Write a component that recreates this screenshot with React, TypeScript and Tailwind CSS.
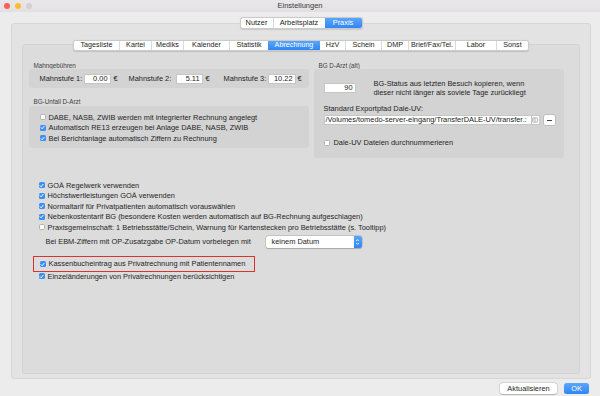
import React from "react";

const Check = ({ checked }: { checked: boolean }) =>
  checked ? (
    <span className="w-[6px] h-[6px] rounded-[1.5px] bg-[#3b8ff6] flex items-center justify-center shrink-0">
      <svg width="5" height="5" viewBox="0 0 10 10">
        <path d="M2 5.3 L4.2 7.6 L8.2 2.6" stroke="white" strokeWidth="1.9" fill="none" strokeLinecap="round" strokeLinejoin="round" />
      </svg>
    </span>
  ) : (
    <span className="w-[6px] h-[6px] rounded-[1.5px] bg-white border-[0.5px] border-[#b0b0b0] shrink-0" />
  );

const Row = ({ checked, children }: { checked: boolean; children: React.ReactNode }) => (
  <div className="flex items-center h-[10.5px] gap-[3px] whitespace-nowrap">
    <Check checked={checked} />
    <span>{children}</span>
  </div>
);

const Field = ({ w, value }: { w: string; value: string }) => (
  <span className={`${w} h-[10px] bg-white border-[0.5px] border-[#c6c6c6] flex items-center justify-end pr-[2px] shrink-0`}>{value}</span>
);

const tabs = ["Tagesliste", "Kartei", "Mediks", "Kalender", "Statistik", "Abrechnung", "HzV", "Schein", "DMP", "Brief/Fax/Tel.", "Labor", "Sonst"];
const tabW = ["w-[46px]", "w-[32px]", "w-[32px]", "w-[46px]", "w-[38px]", "w-[52px]", "w-[26px]", "w-[36px]", "w-[27px]", "w-[47px]", "w-[41px]", "w-[31px]"];

export default function App() {
  return (
    <div className="w-[600px] h-[396px] bg-[#ececec] flex flex-col overflow-hidden text-[#242424] text-[7.4px] font-['Liberation_Sans',Arial,sans-serif]">
      {/* title bar */}
      <div className="h-[12px] shrink-0 grid grid-cols-[1fr_auto_1fr] items-center bg-linear-to-b from-[#e9e7e9] to-[#e2e0e2]">
        <div className="flex items-center gap-[5px] pl-[4px]">
          <span className="w-[6px] h-[6px] rounded-full bg-[#fc5f57]" />
          <span className="w-[6px] h-[6px] rounded-full bg-[#fdbc2e]" />
          <span className="w-[6px] h-[6px] rounded-full bg-[#d3d1d3]" />
        </div>
        <div className="text-[7.5px] text-[#3a3a3a] leading-none">Einstellungen</div>
        <div />
      </div>

      <div className="flex flex-col items-center w-[580px] ml-[11px] pt-[5px]">
        {/* segmented */}
        <div className="relative z-10 h-[12px] flex bg-white border-[0.5px] border-[#cacaca] rounded-[3px] shadow-[0_0.5px_1px_rgba(0,0,0,0.12)] overflow-hidden">
          <div className="w-[33px] flex items-center justify-center border-r-[0.5px] border-[#d6d6d6]">Nutzer</div>
          <div className="w-[51px] flex items-center justify-center">Arbeitsplatz</div>
          <div className="w-[37px] flex items-center justify-center bg-linear-to-b from-[#5aa6fb] to-[#2f86f5] text-white">Praxis</div>
        </div>

        {/* outer panel */}
        <div className="-mt-[6px] w-full h-[356px] bg-[#e3e3e3] border-[0.5px] border-[#d6d6d6] rounded-[3px] flex flex-col items-center pt-[15.5px]">
          {/* tab bar */}
          <div className="relative z-10 h-[11px] flex bg-white border-[0.5px] border-[#cacaca] rounded-[2.5px] shadow-[0_0.5px_1px_rgba(0,0,0,0.12)] overflow-hidden text-[7.2px]">
            {tabs.map((t, i) => (
              <div
                key={t}
                className={`${tabW[i]} flex items-center justify-center ${i < tabs.length - 1 && i !== 4 && i !== 5 ? "border-r-[0.5px] border-[#dadada]" : ""} ${t === "Abrechnung" ? "bg-linear-to-b from-[#5aa6fb] to-[#2f86f5] text-white" : ""}`}
              >
                {t}
              </div>
            ))}
          </div>

          {/* inner panel */}
          <div className="-mt-[7px] w-[558px] h-[330px] bg-[#dcdcdc] border-[0.5px] border-[#d2d2d2] rounded-[3px] pl-[5.5px] pt-[18.5px] flex flex-col">
            <div className="flex items-start gap-[5px]">
              {/* left column */}
              <div className="w-[280px] flex flex-col">
                <div className="h-[6px] leading-[6px] text-[6.3px] pl-[5px] text-[#3c3c3c]">Mahngebühren</div>
                <div className="h-[19px] bg-[#d3d3d3] rounded-[3px] flex items-center pl-[11px] whitespace-nowrap">
                  <span className="w-[44px]">Mahnstufe 1:</span>
                  <Field w="w-[27px]" value="0.00" />
                  <span className="w-[18px] pl-[3px]">€</span>
                  <span className="w-[47px]">Mahnstufe 2:</span>
                  <Field w="w-[27px]" value="5.11" />
                  <span className="w-[21px] pl-[3px]">€</span>
                  <span className="w-[44px]">Mahnstufe 3:</span>
                  <Field w="w-[28px]" value="10.22" />
                  <span className="pl-[2px]">€</span>
                </div>
                <div className="mt-[11px] mb-[1px] h-[6px] leading-[6px] text-[6.3px] pl-[5px] text-[#3c3c3c]">BG-Unfall D-Arzt</div>
                <div className="h-[42px] bg-[#d3d3d3] rounded-[3px] flex flex-col pl-[11px] pt-[6px]">
                  <Row checked={false}>DABE, NASB, ZWIB werden mit integrierter Rechnung angelegt</Row>
                  <Row checked={true}>Automatisch RE13 erzeugen bei Anlage DABE, NASB, ZWIB</Row>
                  <Row checked={true}>Bei Berichtanlage automatisch Ziffern zu Rechnung</Row>
                </div>
              </div>

              {/* right column */}
              <div className="w-[250px] flex flex-col">
                <div className="h-[6px] leading-[6px] text-[6.3px] pl-[5px] text-[#3c3c3c]">BG D-Arzt (alt)</div>
                <div className="h-[89px] bg-[#d3d3d3] rounded-[3px] flex flex-col pl-[10px] pt-[10px]">
                  <div className="flex items-center h-[18px]">
                    <Field w="w-[32px]" value="90" />
                    <div className="ml-[18px] leading-[9px] whitespace-nowrap">
                      <div>BG-Status aus letzten Besuch kopieren, wenn</div>
                      <div>dieser nicht länger als soviele Tage zurückliegt</div>
                    </div>
                  </div>
                  <div className="mt-[8px] h-[8px] leading-[8px] whitespace-nowrap">Standard Exportpfad Dale-UV:</div>
                  <div className="mt-[2px] flex items-center h-[10px]">
                    <div className="w-[208px] h-[10px] bg-white border-[0.5px] border-[#c6c6c6] flex items-center pl-[1px] overflow-hidden whitespace-nowrap">
                      /Volumes/tomedo-server-eingang/TransferDALE-UV/transfer.:
                    </div>
                    <div className="w-[8px] h-[10px] bg-white border-[0.5px] border-l-0 border-[#c6c6c6] flex items-center justify-center">
                      <svg width="6" height="6" viewBox="0 0 12 12">
                        <rect x="1" y="1.5" width="10" height="9" rx="1" fill="#f2f2f2" stroke="#8a8a8a" strokeWidth="1" />
                        <line x1="6" y1="1.5" x2="6" y2="10.5" stroke="#8a8a8a" strokeWidth="1" />
                        <line x1="2.5" y1="4" x2="4.5" y2="4" stroke="#8a8a8a" strokeWidth="0.8" />
                        <line x1="2.5" y1="6" x2="4.5" y2="6" stroke="#8a8a8a" strokeWidth="0.8" />
                      </svg>
                    </div>
                    <div className="ml-[4px] w-[11px] h-[10px] bg-white rounded-[1.5px] shadow-[0_0_0_0.5px_rgba(0,0,0,0.2)] flex items-center justify-center">
                      <span className="w-[5px] h-[1px] bg-[#444]" />
                    </div>
                  </div>
                  <div className="mt-[13px] flex items-center h-[10px] gap-[4px] whitespace-nowrap">
                    <Check checked={false} />
                    <span>Dale-UV Dateien durchnummerieren</span>
                  </div>
                </div>
              </div>
            </div>

            {/* option list */}
            <div className="mt-[22px] ml-[10px] flex flex-col">
              <Row checked={true}>GOÄ Regelwerk verwenden</Row>
              <Row checked={true}>Höchstwertleistungen GOÄ verwenden</Row>
              <Row checked={true}>Normaltarif für Privatpatienten automatisch vorauswählen</Row>
              <Row checked={true}>Nebenkostentarif BG (besondere Kosten werden automatisch auf BG-Rechnung aufgeschlagen)</Row>
              <Row checked={false}>Praxisgemeinschaft: 1 Betriebsstätte/Schein, Warnung für Kartenstecken pro Betriebsstätte (s. Tooltipp)</Row>
              <div className="mt-[3.5px] h-[12px] flex items-center pl-[7px] whitespace-nowrap">
                <span className="w-[220px]">Bei EBM-Ziffern mit OP-Zusatzgabe OP-Datum vorbelegen mit</span>
                <div className="w-[96px] h-[12px] bg-white rounded-[2px] shadow-[0_0_0_0.5px_rgba(0,0,0,0.2),0_0.5px_1px_rgba(0,0,0,0.15)] flex items-center">
                  <span className="flex-1 pl-[6px]">keinem Datum</span>
                  <span className="w-[8px] h-full bg-linear-to-b from-[#5aa6fb] to-[#2f86f5] rounded-r-[2px] flex items-center justify-center">
                    <svg width="5" height="8" viewBox="0 0 5 8">
                      <path d="M1.2 3 L2.5 1.6 L3.8 3" stroke="white" strokeWidth="0.8" fill="none" />
                      <path d="M1.2 5 L2.5 6.4 L3.8 5" stroke="white" strokeWidth="0.8" fill="none" />
                    </svg>
                  </span>
                </div>
              </div>
              <div className="mt-[8px] -ml-[6px] w-[222px] h-[16px] border border-[#d8332e] flex items-center pl-[6px]">
                <Row checked={true}>Kassenbucheintrag aus Privatrechnung mit Patientennamen</Row>
              </div>
              <div className="-mt-[1px]">
                <Row checked={true}>Einzeländerungen von Privatrechnungen berücksichtigen</Row>
              </div>
            </div>
          </div>
        </div>
      </div>

      {/* bottom buttons */}
      <div className="mt-[4px] flex justify-end gap-[7px] pr-[11px]">
        <div className="w-[57px] h-[11px] bg-white rounded-[2.5px] shadow-[0_0_0_0.5px_rgba(0,0,0,0.18),0_0.5px_1px_rgba(0,0,0,0.15)] flex items-center justify-center">Aktualisieren</div>
        <div className="w-[25px] h-[11px] bg-linear-to-b from-[#5aa6fb] to-[#2f86f5] text-white rounded-[2.5px] flex items-center justify-center">OK</div>
      </div>
    </div>
  );
}
